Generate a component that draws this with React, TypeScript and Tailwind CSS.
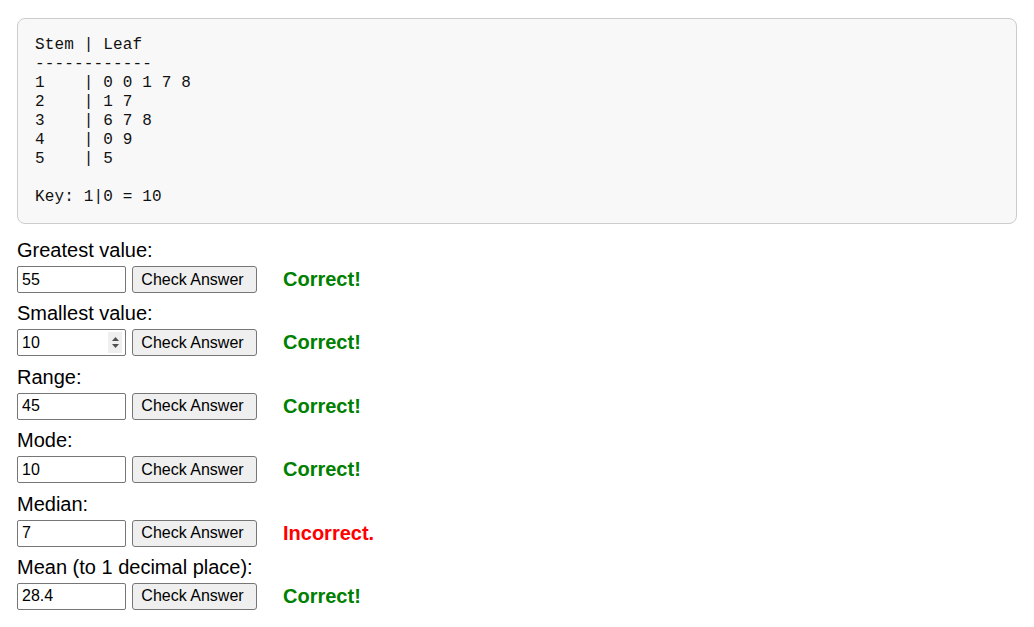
import React from 'react';

type Question = {
  label: string;
  value: string;
  correct: boolean;
  spinner?: boolean;
};

const questions: Question[] = [
  { label: 'Greatest value:', value: '55', correct: true },
  { label: 'Smallest value:', value: '10', correct: true, spinner: true },
  { label: 'Range:', value: '45', correct: true },
  { label: 'Mode:', value: '10', correct: true },
  { label: 'Median:', value: '7', correct: false },
  { label: 'Mean (to 1 decimal place):', value: '28.4', correct: true },
];

const plot = `Stem | Leaf
------------
1    | 0 0 1 7 8
2    | 1 7
3    | 6 7 8
4    | 0 9
5    | 5

Key: 1|0 = 10`;

function Spinner() {
  return (
    <span className="absolute right-[4px] top-[3px] flex h-[21px] w-[14px] flex-col items-center justify-center gap-[3px] bg-[#efefef]">
      <svg width="7" height="4" viewBox="0 0 7 4">
        <path d="M0 4 L3.5 0 L7 4 Z" fill="#505050" />
      </svg>
      <svg width="7" height="4" viewBox="0 0 7 4">
        <path d="M0 0 L3.5 4 L7 0 Z" fill="#505050" />
      </svg>
    </span>
  );
}

function QuestionRow({ q }: { q: Question }) {
  return (
    <div>
      <label className="block text-[20px] leading-[23px] text-black mb-[4px]">{q.label}</label>
      <div className="flex items-center">
        <div className="relative">
          <input
            type="text"
            defaultValue={q.value}
            className="block h-[27px] w-[109px] rounded-[2px] border border-[#767676] bg-white px-[4px] text-[16px] text-black outline-none"
          />
          {q.spinner && <Spinner />}
        </div>
        <button
          type="button"
          className="ml-[6px] h-[27px] w-[125px] rounded-[3px] border border-[#767676] bg-[#efefef] pr-[4px] text-[16px] text-black"
        >
          Check Answer
        </button>
        <span
          className={`ml-[26px] text-[20px] font-bold leading-[23px] ${
            q.correct ? 'text-[#008000]' : 'text-[#ff0000]'
          }`}
        >
          {q.correct ? 'Correct!' : 'Incorrect.'}
        </span>
      </div>
    </div>
  );
}

export default function App() {
  return (
    <div className="min-h-[627px] bg-white px-[17px] pt-[18px] font-['Liberation_Sans',Arial,sans-serif]">
      <pre className="w-[1000px] rounded-[8px] border border-[#cccccc] bg-[#f8f8f8] pl-[17px] pr-[16px] pt-[17px] pb-[16px] font-['Liberation_Mono',monospace] text-[16px] leading-[19px] tracking-[0.15px] text-[#111]">
        {plot}
      </pre>
      <div className="mt-[15px] flex flex-col gap-y-[9.4px]">
        {questions.map((q) => (
          <QuestionRow key={q.label} q={q} />
        ))}
      </div>
    </div>
  );
}
